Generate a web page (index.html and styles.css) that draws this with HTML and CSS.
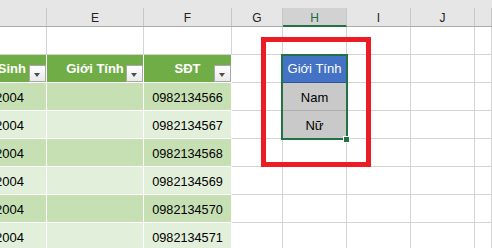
FILE: index.html
```html
<!DOCTYPE html>
<html lang="vi">
<head>
<meta charset="utf-8">
<title>Sheet</title>
<link rel="stylesheet" href="styles.css">
</head>
<body>
<div class="app">
  <div class="colheads">
    <div class="ch"></div>
    <div class="ch">E</div>
    <div class="ch">F</div>
    <div class="ch">G</div>
    <div class="ch sel">H</div>
    <div class="ch">I</div>
    <div class="ch">J</div>
    <div class="ch"></div>
  </div>
  <div class="sheet">
    <div class="c"></div><div class="c"></div><div class="c"></div><div class="c"></div><div class="c"></div><div class="c"></div><div class="c"></div><div class="c"></div>

    <div class="c t th hd-d"><span>Ngày Sinh</span><span class="fbtn"></span></div>
    <div class="c t th hd"><span></span><span class="ht">Giới Tính</span><span class="fbtn"></span></div>
    <div class="c t th hd"><span></span><span class="ht">SĐT</span><span class="fbtn"></span></div>
    <div class="c"></div>
    <div class="c blue">Giới Tính</div>
    <div class="c"></div><div class="c"></div><div class="c"></div>

    <div class="c t odd d">12/03/2004</div><div class="c t odd"></div><div class="c t odd num">0982134566</div>
    <div class="c"></div><div class="c gray sep">Nam</div><div class="c"></div><div class="c"></div><div class="c"></div>

    <div class="c t even d">25/07/2004</div><div class="c t even"></div><div class="c t even num">0982134567</div>
    <div class="c"></div><div class="c gray">Nữ</div><div class="c"></div><div class="c"></div><div class="c"></div>

    <div class="c t odd d">08/11/2004</div><div class="c t odd"></div><div class="c t odd num">0982134568</div>
    <div class="c"></div><div class="c"></div><div class="c"></div><div class="c"></div><div class="c"></div>

    <div class="c t even d">19/01/2004</div><div class="c t even"></div><div class="c t even num">0982134569</div>
    <div class="c"></div><div class="c"></div><div class="c"></div><div class="c"></div><div class="c"></div>

    <div class="c t odd d">30/09/2004</div><div class="c t odd"></div><div class="c t odd num">0982134570</div>
    <div class="c"></div><div class="c"></div><div class="c"></div><div class="c"></div><div class="c"></div>

    <div class="c t even d">14/06/2004</div><div class="c t even"></div><div class="c t even num">0982134571</div>
    <div class="c"></div><div class="c"></div><div class="c"></div><div class="c"></div><div class="c"></div>
  </div>

  <div class="callout"></div>
  <div class="selection"><span class="handle"></span></div>
</div>
</body>
</html>
```
FILE: styles.css
```css
* { box-sizing: border-box; }
html, body { margin: 0; padding: 0; }
body {
  width: 492px;
  height: 248px;
  overflow: hidden;
  background: #ffffff;
  font-family: "Liberation Sans", Arial, sans-serif;
}
.app {
  position: relative;
  width: 492px;
  height: 248px;
  overflow: hidden;
}
.colheads {
  display: grid;
  grid-template-columns: 47px 97px 88px 51px 64px 64px 64px 1fr;
  height: 27px;
  padding-top: 8px;
  background: #e6e6e6;
  border-bottom: 1px solid #ababab;
}
.ch {
  border-right: 1px solid #c6c6c6;
  display: flex;
  align-items: center;
  justify-content: center;
  padding-top: 2px;
  font-size: 12px;
  color: #222222;
}
.ch.sel {
  background: #d2d2d2;
  color: #1d6b40;
  border-bottom: 2px solid #217346;
  margin-bottom: -1px;
}
.sheet {
  display: grid;
  grid-template-columns: 47px 97px 88px 51px 64px 64px 64px 1fr;
  grid-auto-rows: 28px;
  font-size: 13px;
  color: #000000;
}
.c {
  border-right: 1px solid #d4d4d4;
  border-bottom: 1px solid #d4d4d4;
  display: flex;
  align-items: center;
  justify-content: center;
  white-space: nowrap;
  overflow: hidden;
  padding-top: 2px;
}
.t { border-color: #ffffff; }
.th {
  background: #70ad47;
  color: #ffffff;
  font-weight: bold;
  padding-top: 0;
}
.hd-d {
  justify-content: flex-end;
  gap: 3px;
}
.hd {
  display: grid;
  grid-template-columns: 17px 1fr 17px;
  align-items: center;
}
.ht { text-align: center; }
.fbtn {
  align-self: end;
  position: relative;
  width: 17px;
  height: 17px;
  flex: none;
  border: 1px solid #a9a9a9;
  background: linear-gradient(#ffffff, #e9e9e9);
}
.fbtn::after {
  content: "";
  position: absolute;
  left: 4px;
  top: 7px;
  border-left: 3.5px solid transparent;
  border-right: 3.5px solid transparent;
  border-top: 4px solid #4d4d4d;
}
.odd { background: #c6e0b4; }
.even { background: #e2efda; }
.d {
  justify-content: flex-end;
  padding-right: 22px;
}
.num { font-size: 12.7px; }
.blue {
  background: #4472c4;
  color: #ffffff;
  border-bottom-color: #2f5597;
  padding-top: 0;
}
.gray { background: #c9c9c9; }
.sep { border-bottom-color: #aeaeae; }
.callout {
  position: absolute;
  left: 261px;
  top: 37px;
  width: 110px;
  height: 130px;
  border: 5px solid #ed1c24;
}
.selection {
  position: absolute;
  left: 281px;
  top: 54px;
  width: 67px;
  height: 86px;
  border: 2px solid #217346;
}
.handle {
  position: absolute;
  left: 60px;
  top: 80px;
  width: 7px;
  height: 7px;
  background: #217346;
  border: 1px solid #ffffff;
}
```
